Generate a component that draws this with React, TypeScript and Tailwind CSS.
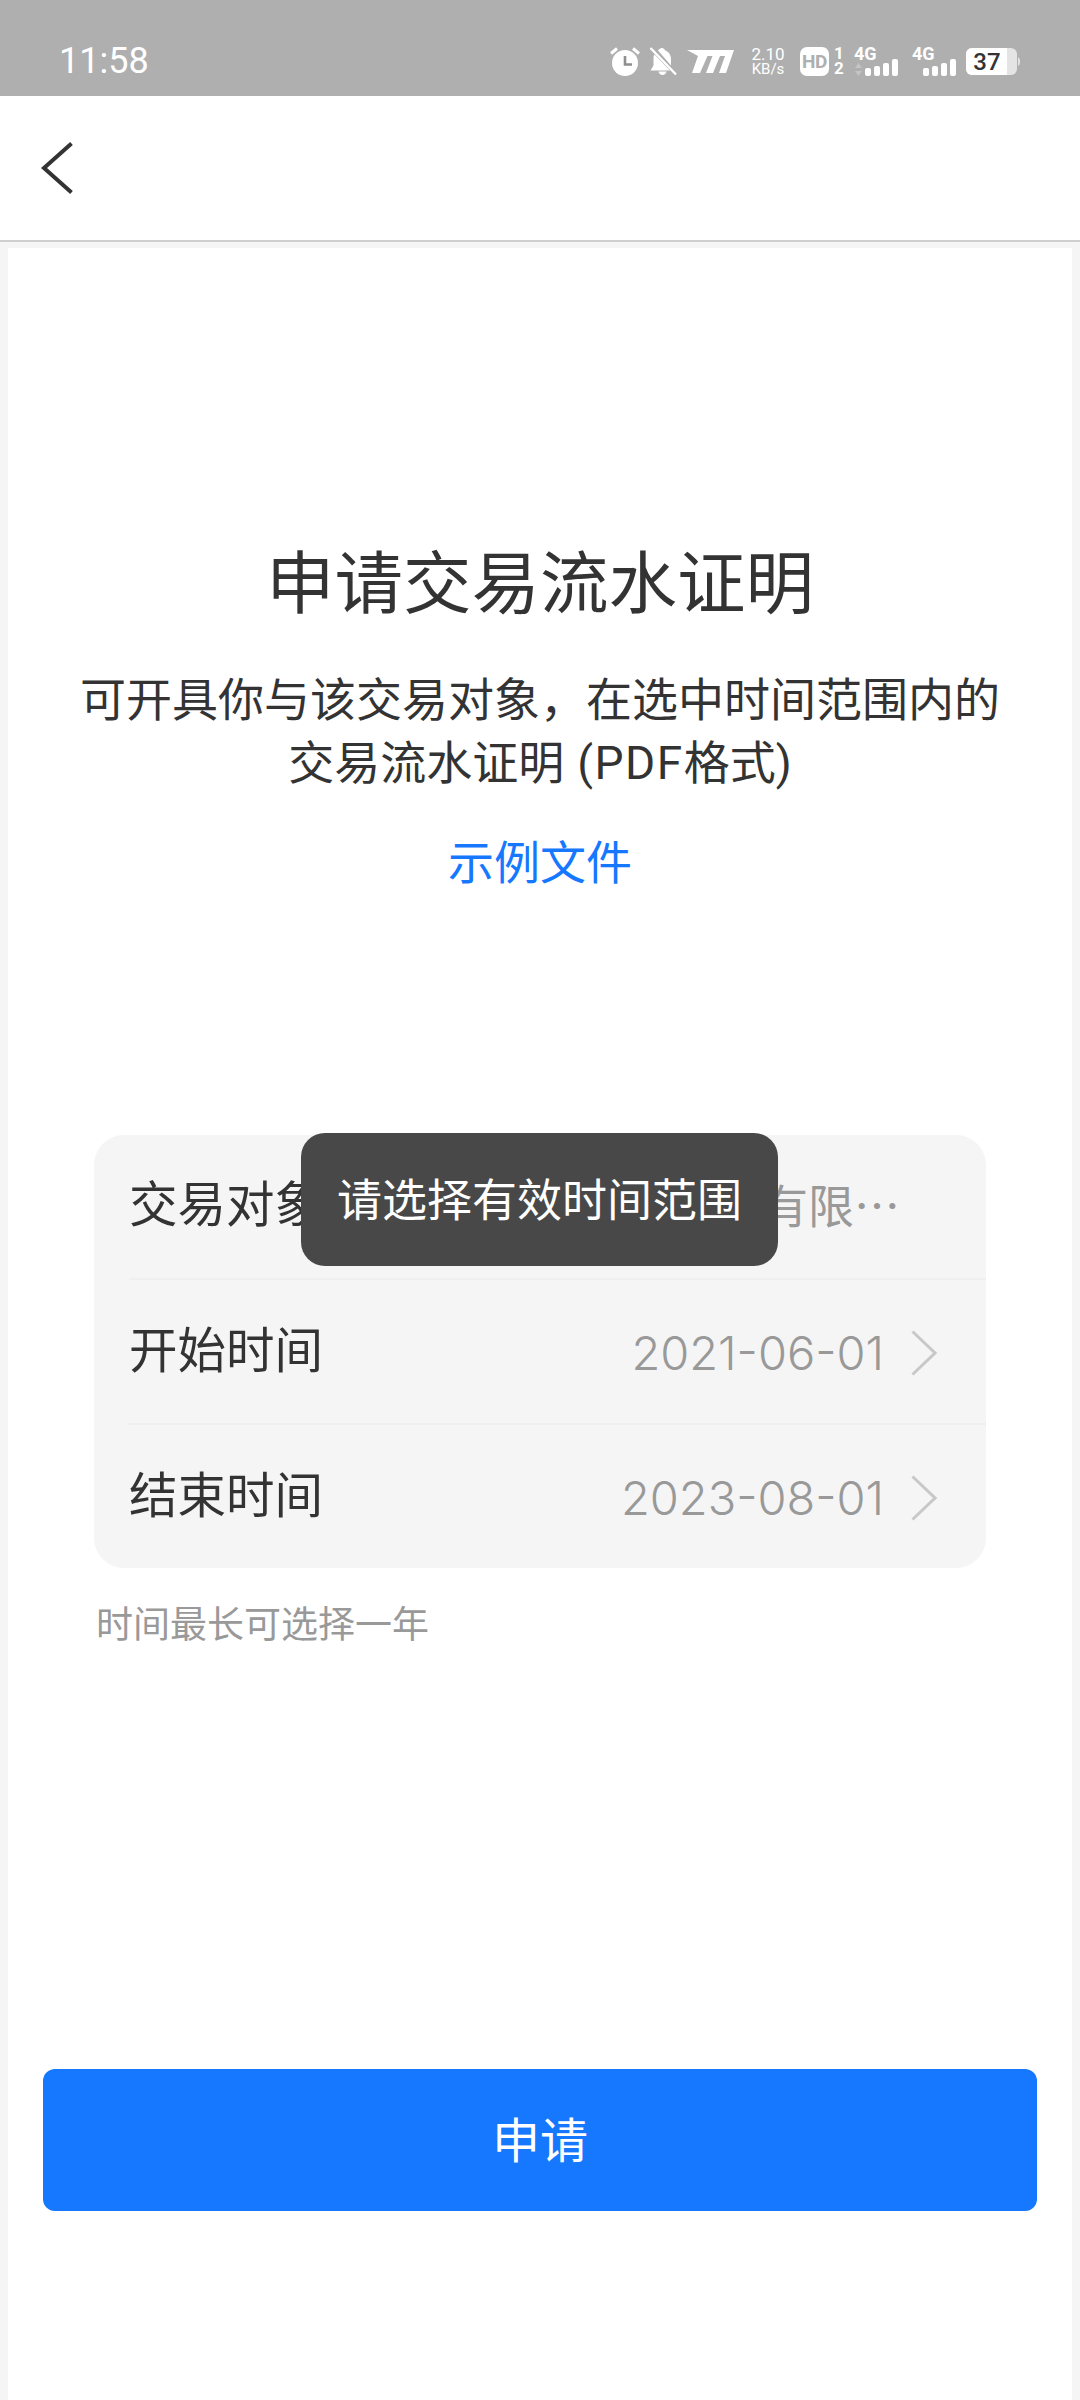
const StatusIcons = () => (
  <div className="flex items-center">
    {/* alarm */}
    <svg width="30" height="29" viewBox="0 0 30 29">
      <circle cx="15" cy="16" r="13" fill="#fff" />
      <path d="M15 9v8.500h7" fill="none" stroke="#8f8f8f" strokeWidth="2.600" />
      <path d="M1 6.500 7 1.500M29 6.500 23 1.500" stroke="#fff" strokeWidth="3" />
    </svg>
    {/* muted bell */}
    <svg width="28" height="29" viewBox="0 0 28 29" className="ml-[9px]">
      <path d="M5.500 7.500 21 23.500H1.500l3-5v-8c0-1 .3-2 1-3z" fill="#fff" />
      <path d="M9 3.500C10 2 11.500 1 13 1c1.500 0 2.500 1 2.800 2.200 4 1.300 6.200 5 6.200 9v6.300z" fill="#fff" />
      <path d="M9.500 24.500h8c-.5 2.300-2 3.500-4 3.500s-3.500-1.200-4-3.500z" fill="#fff" />
      <path d="M1.500 1 27 27.500" stroke="#fff" strokeWidth="2.400" />
    </svg>
    {/* carrier mark */}
    <svg width="47" height="23" viewBox="0 0 47 23" className="ml-[10px]">
      <path d="M0 0H47L39 23H32L38 6H33L26 23H19L25.500 6H20.500L13 23H5L11 6Z" fill="#fff" />
    </svg>
    <div className="ml-[16px] flex w-[36px] flex-col items-center font-['Roboto',sans-serif] text-white">
      <span className="text-[17px] leading-[15px]">2.10</span>
      <span className="text-[15px] leading-[14px]">KB/s</span>
    </div>
    {/* hd + sim */}
    <div className="ml-[14px] flex h-[29px] w-[29px] items-center justify-center rounded-[7px] bg-white font-['Roboto',sans-serif] text-[19px] leading-none font-bold tracking-[-0.5px] text-[#afafaf]">HD</div>
    <div className="ml-[5px] flex w-[10px] flex-col items-center font-['Roboto',sans-serif] font-bold text-white">
      <span className="text-[17px] leading-[15px]">1</span>
      <span className="text-[17px] leading-[15px]">2</span>
    </div>
    <Signal className="ml-[10px]" arrows />
    <Signal className="ml-[14px]" />
    {/* battery */}
    <svg width="54" height="27" viewBox="0 0 54 27" className="ml-[10px]">
      <rect x="0" y="0" width="51" height="27" rx="6" fill="#e4e4e4" />
      <path d="M6 0h35v27H6a6 6 0 0 1-6-6V6a6 6 0 0 1 6-6z" fill="#fff" />
      <path d="M52 9a3 4.500 0 0 1 2 4.500a3 4.500 0 0 1-2 4.500z" fill="#e4e4e4" />
      <text x="21" y="21.500" textAnchor="middle" fontFamily="Roboto, sans-serif" fontSize="24" fontWeight="500" fill="#333">37</text>
    </svg>
  </div>
);

function Signal({ className, arrows }: { className: string; arrows?: boolean }) {
  return (
    <div className={`relative h-[29px] w-[44px] ${className}`}>
      <span className="absolute top-[-2px] left-0 font-['Roboto',sans-serif] text-[18px] leading-[18px] font-bold text-white">4G</span>
      {arrows && (
        <svg width="7" height="13" viewBox="0 0 7 13" className="absolute bottom-0 left-[1px]">
          <path d="M3.500 0 7 5H0zM3.500 13 0 8h7z" fill="#c4c4c4" />
        </svg>
      )}
      <div className="absolute right-0 bottom-0 flex items-end gap-[3px]">
        <i className="h-[8px] w-[6px] rounded-[2px] bg-white" />
        <i className="h-[10px] w-[6px] rounded-[2px] bg-white" />
        <i className="h-[13px] w-[6px] rounded-[2px] bg-white" />
        <i className="h-[17px] w-[6px] rounded-[2px] bg-white" />
      </div>
    </div>
  );
}

const Chevron = () => (
  <svg width="26" height="46" viewBox="0 0 26 46" className="ml-[27px]">
    <path d="M1.500 1.500 L24 23 L1.500 44.500" fill="none" stroke="#c8c8c8" strokeWidth="3" />
  </svg>
);

function Row({ label, children, last, arrow }: { label: string; children: React.ReactNode; last?: boolean; arrow?: boolean }) {
  return (
    <div className={`flex items-center ${arrow ? 'pt-[2px] pr-[49px]' : 'pr-[86px]'} ${last ? 'h-[143px]' : 'h-[145px] border-b-2 border-[#efefef]'}`}>
      <span className="text-[48.500px] leading-none text-[#333]">{label}</span>
      {children}
      {arrow && <Chevron />}
    </div>
  );
}

const DateValue = ({ value }: { value: string }) => (
  <span className="ml-auto font-['Inter',sans-serif] text-[47px] leading-none font-[350] text-[#999]">{value}</span>
);

export default function App() {
  return (
    <div className="flex h-[2400px] w-[1080px] flex-col bg-[#f5f5f5] font-['Roboto','Noto_Sans_CJK_SC',sans-serif]">
      <div className="flex h-[96px] items-center justify-between bg-[#afafaf] pt-[26px] pr-[60px] pl-[59px]">
        <span className="text-[36px] leading-none text-white">11:58</span>
        <StatusIcons />
      </div>
      <div className="flex h-[146px] items-center border-b-2 border-[#cfcfcf] bg-white pl-[41px]">
        <svg width="32" height="52" viewBox="0 0 32 52">
          <path d="M30.500 1.500 L3 26 L30.500 50.500" fill="none" stroke="#333" strokeWidth="4" />
        </svg>
      </div>
      <main className="relative mx-[8px] mt-[6px] flex flex-1 flex-col items-center bg-white">
        <h1 className="mt-[299px] text-[68.500px] leading-[76px] font-normal text-[#333]">申请交易流水证明</h1>
        <p className="mt-[46px] w-[940px] text-center text-[46px] leading-[63px] text-[#333]">
          可开具你与该交易对象，在选中时间范围内的
          <br />
          交易流水证明<span className="tracking-[1.500px]"> (PDF</span>格式)
        </p>
        <a className="mt-[36px] text-[46px] leading-[64px] text-[#1677ff]">示例文件</a>

        <section className="mt-[240px] ml-[86px] w-[892px] self-start rounded-[30px] bg-[#f5f5f5] pl-[35px]">
          <Row label="交易对象">
            <span className="mb-[3px] ml-auto text-[46px] leading-none text-[#999]">
              北京某某信息技术有限<span className="font-['Noto_Sans_CJK_SC',sans-serif]" lang="zh-CN">…</span>
            </span>
          </Row>
          <Row label="开始时间" arrow><DateValue value="2021-06-01" /></Row>
          <Row label="结束时间" arrow last><DateValue value="2023-08-01" /></Row>
        </section>
        <p className="mt-[36px] self-start pl-[88px] text-[37px] leading-[44px] text-[#999]">时间最长可选择一年</p>

        <button className="absolute top-[1821px] left-[35px] flex h-[142px] w-[994px] items-center justify-center rounded-[12px] bg-[#1677ff] pt-[4px] text-[48px] text-white">申请</button>

        {/* toast */}
        <div className="absolute top-[885px] left-[293px] flex h-[133px] w-[477px] items-center justify-center rounded-[24px] bg-[#484848] pt-[3px] text-[45px] leading-none text-white">
          请选择有效时间范围
        </div>
      </main>
    </div>
  );
}
